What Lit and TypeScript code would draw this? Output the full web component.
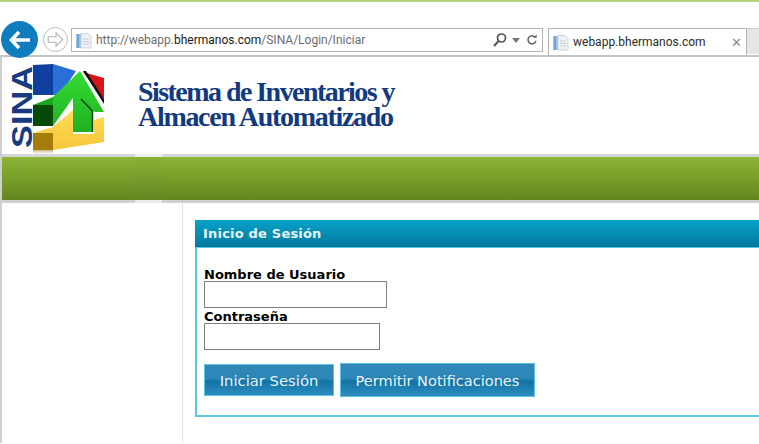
import { LitElement, html, css } from "lit";
import { customElement } from "lit/decorators.js";

const pageIcon = html`<svg class="pg" width="17" height="17" viewBox="0 0 17 17">
  <rect x="1" y="2" width="5" height="14" fill="#9cc3e6"/>
  <rect x="2" y="2" width="2" height="14" fill="#6fa5d6"/>
  <path d="M6 1.5h7l3 3v11.5H6z" fill="#f0f2f5" stroke="#c4c9cf" stroke-width=".8"/>
  <path d="M8 7h6M8 9.5h6M8 12h6" stroke="#c9ced4" stroke-width="1"/>
</svg>`;

@customElement("app-root")
export class AppRoot extends LitElement {
  static styles = css`
    :host { display: block; width: 759px; height: 444px; overflow: hidden; background: #fff; font-family: "DejaVu Sans", sans-serif; }
    .strip { height: 2px; background: #b9d27f; }
    .chrome { height: 34px; margin-top: 18px; padding-left: 1px; display: flex; align-items: flex-start; }
    .back { width: 37px; height: 37px; border-radius: 50%; background: #0f7dbd; flex: none; margin-top: 1px; display: flex; align-items: center; justify-content: center; position: relative; z-index: 1; }
    .fwd { width: 25px; height: 25px; box-sizing: border-box; border: 1px solid #bdbdbd; border-radius: 50%; flex: none; margin: 7px 0 0 5px; display: flex; align-items: center; justify-content: center; background: #fff; }
    .url { width: 472px; height: 24px; box-sizing: border-box; border: 1px solid #b4b4b4; margin: 8px 0 0 3px; display: flex; align-items: center; padding-left: 3px; font: 12px Roboto, sans-serif; color: #6d6d6d; flex: none; }
    .url b { font-weight: 400; color: #1a1a1a; }
    .url .pg { margin-right: 4px; flex: none; }
    .tools { margin-left: auto; display: flex; align-items: center; gap: 4px; padding-right: 4px; }
    .refresh { margin-left: 2px; }
    .tab { width: 199px; height: 27px; box-sizing: border-box; border: 1px solid #b4b4b4; border-bottom: none; margin: 8px 0 0 5px; display: flex; align-items: center; padding: 0 6px 0 3px; font: 12px Roboto, sans-serif; color: #2c2c2c; flex: none; }
    .tab .pg { margin-right: 4px; }
    .tab .x { margin-left: auto; margin-right: -2px; color: #8c8c8c; font-size: 13px; line-height: 1; }
    .newtab { flex: 1; height: 26px; margin-top: 8px; background: #e6e6e6; border-top: 1px solid #d0d0d0; box-sizing: border-box; }
    .page { border-top: 2px solid #c4c4c4; border-left: 2px solid #cfcfcf; height: 388px; box-sizing: border-box; margin-top: 1px; }
    .head { height: 97px; display: flex; align-items: flex-start; overflow: hidden; }
    .logo { flex: none; margin: 5px 0 0 2px; }
    .title { margin: 22px 0 0 30px; font: 700 28px/25px "Liberation Serif", serif; color: #123a80; }
    .l1 { display: block; letter-spacing: -1.55px; }
    .l2 { display: block; letter-spacing: -1.3px; }
    .bar { height: 49px; box-sizing: border-box; border-top: 3px solid #d6d6d6; border-bottom: 3px solid #d0d0cc; background: linear-gradient(#8db536, #64851f); position: relative; }
    .bar::after { content: ""; position: absolute; top: -3px; bottom: -3px; left: 133px; width: 27px; background: linear-gradient(rgba(255,255,255,.6) 0, rgba(255,255,255,.6) 3px, rgba(110,130,50,.06) 3px, rgba(110,130,50,.06) calc(100% - 3px), rgba(255,255,255,.6) calc(100% - 3px)); }
    .main { display: flex; height: 240px; }
    .side { width: 180px; flex: none; border-right: 1px solid #e2e2e2; }
    .panel { margin: 17px 0 0 12px; width: 600px; height: 197px; box-sizing: border-box; border: 2px solid #5cc9df; border-right: none; border-top: none; }
    .phead { height: 27px; margin: 0 0 0 -2px; background: linear-gradient(#07a2c9, #03789d); color: #e8f6fa; font: 700 13px/27px "DejaVu Sans", sans-serif; letter-spacing: .2px; padding-left: 8px; border-bottom: 1px solid #5cc9df; box-sizing: content-box; }
    .form { padding: 20px 0 0 7px; color: #000; }
    label { display: block; font: 700 13px/13px "DejaVu Sans", sans-serif; }
    .in { display: block; height: 27px; box-sizing: border-box; border: 1px solid #808080; background: #fff; margin-bottom: 2px; }
    .u { width: 183px; }
    .p { width: 176px; }
    .btns { display: flex; gap: 6px; margin-top: 13px; align-items: center; }
    .btn { box-sizing: border-box; border: 1px solid #5cc2e2; color: #e9f4f9; font: 400 14.8px "DejaVu Sans", sans-serif; display: flex; align-items: center; justify-content: center; background: linear-gradient(#3189ba 0%, #2b86b6 47%, #1273a5 53%, #2e8dbf 100%); }
    .b1 { width: 130px; height: 32px; }
    .b2 { width: 195px; height: 34px; font-size: 14.55px; }
  `;

  render() {
    return html`
      <div class="strip"></div>
      <div class="chrome">
        <div class="back">
          <svg width="22" height="20" viewBox="0 0 22 20"><path d="M10 2 2.5 10 10 18M3 10h18" fill="none" stroke="#fff" stroke-width="3.6"/></svg>
        </div>
        <div class="fwd">
          <svg width="19" height="17" viewBox="0 0 17 15"><path d="M9 1.5 15 7.5 9 13.5V10H2V5h7z" fill="none" stroke="#b5b5b5" stroke-width="1"/></svg>
        </div>
        <div class="url">
          ${pageIcon}
          <span>http://webapp.<b>bhermanos.com</b>/SINA/Login/Iniciar</span>
          <span class="tools">
            <svg width="16" height="16" viewBox="0 0 16 16"><circle cx="9.5" cy="6" r="4" fill="none" stroke="#555" stroke-width="1.7"/><path d="M6.5 9 2 14" stroke="#555" stroke-width="2"/></svg>
            <svg width="8" height="5" viewBox="0 0 8 5"><path d="M0 0h8L4 5z" fill="#777"/></svg>
            <svg class="refresh" width="12" height="12" viewBox="0 0 14 14"><path d="M11 4.2A4.7 4.7 0 1 0 11.6 8" fill="none" stroke="#666" stroke-width="1.8"/><path d="M8.5 4.5h4v-4z" fill="#666"/></svg>
          </span>
        </div>
        <div class="tab">${pageIcon}<span>webapp.bhermanos.com</span><span class="x">✕</span></div>
        <div class="newtab"></div>
      </div>
      <div class="page">
        <div class="head">
          <svg class="logo" width="104" height="92" viewBox="4 62 104 92">
            <defs>
              <linearGradient id="gr" x1="0" y1="0" x2="0" y2="1"><stop offset="0" stop-color="#35dc35"/><stop offset="1" stop-color="#20b020"/></linearGradient>
              <linearGradient id="ye" x1="0" y1="0" x2="0" y2="1"><stop offset="0" stop-color="#ffdc55"/><stop offset="1" stop-color="#f6c63c"/></linearGradient>
              <linearGradient id="fade" x1="0" y1="0" x2="0" y2="1"><stop offset="0" stop-color="#c9b88a"/><stop offset="1" stop-color="#fff"/></linearGradient>
            </defs>
            <text transform="translate(32 148) rotate(-90)" font-family="Liberation Sans" font-weight="700" font-size="30" textLength="82" lengthAdjust="spacingAndGlyphs" fill="#173a80">SINA</text>
            <path d="M33 65 53 64V95H33z" fill="#0f3f9e"/>
            <path d="M53 64 76 71 60 95H53z" fill="#2a6fd8"/>
            <path d="M83 72 104 78V99z" fill="#d81414"/>
            <path d="M83 71 86 71 104 99V104z" fill="#111"/>
            <path d="M33 150H53V154H33z" fill="url(#fade)"/>
            <path d="M33 133H53V150H33z" fill="#a57c08"/>
            <path d="M33 133 53 127 73 110V134H94V120L104 117V142L53 150V133z" fill="url(#ye)"/>
            <path d="M33 105H53V126H33z" fill="#064a08"/>
            <path d="M33 105 53 97 80 71 104 112 95 112 92 110V132H73V98L53 126V97z" fill="url(#gr)"/>
            <path d="M33 105 53 97V105z" fill="#1aa81a"/>
            <path d="M81 99 92.500 111V132" fill="none" stroke="#0a3f0c" stroke-width="1.5"/>
          </svg>
          <div class="title"><span class="l1">Sistema de Inventarios y</span><span class="l2">Almacen Automatizado</span></div>
        </div>
        <div class="bar"></div>
        <div class="main">
          <div class="side"></div>
          <div class="panel">
            <div class="phead">Inicio de Sesión</div>
            <div class="form">
              <label>Nombre de Usuario</label>
              <div class="in u"></div>
              <label>Contraseña</label>
              <div class="in p"></div>
              <div class="btns">
                <div class="btn b1">Iniciar Sesión</div>
                <div class="btn b2">Permitir Notificaciones</div>
              </div>
            </div>
          </div>
        </div>
      </div>
    `;
  }
}
